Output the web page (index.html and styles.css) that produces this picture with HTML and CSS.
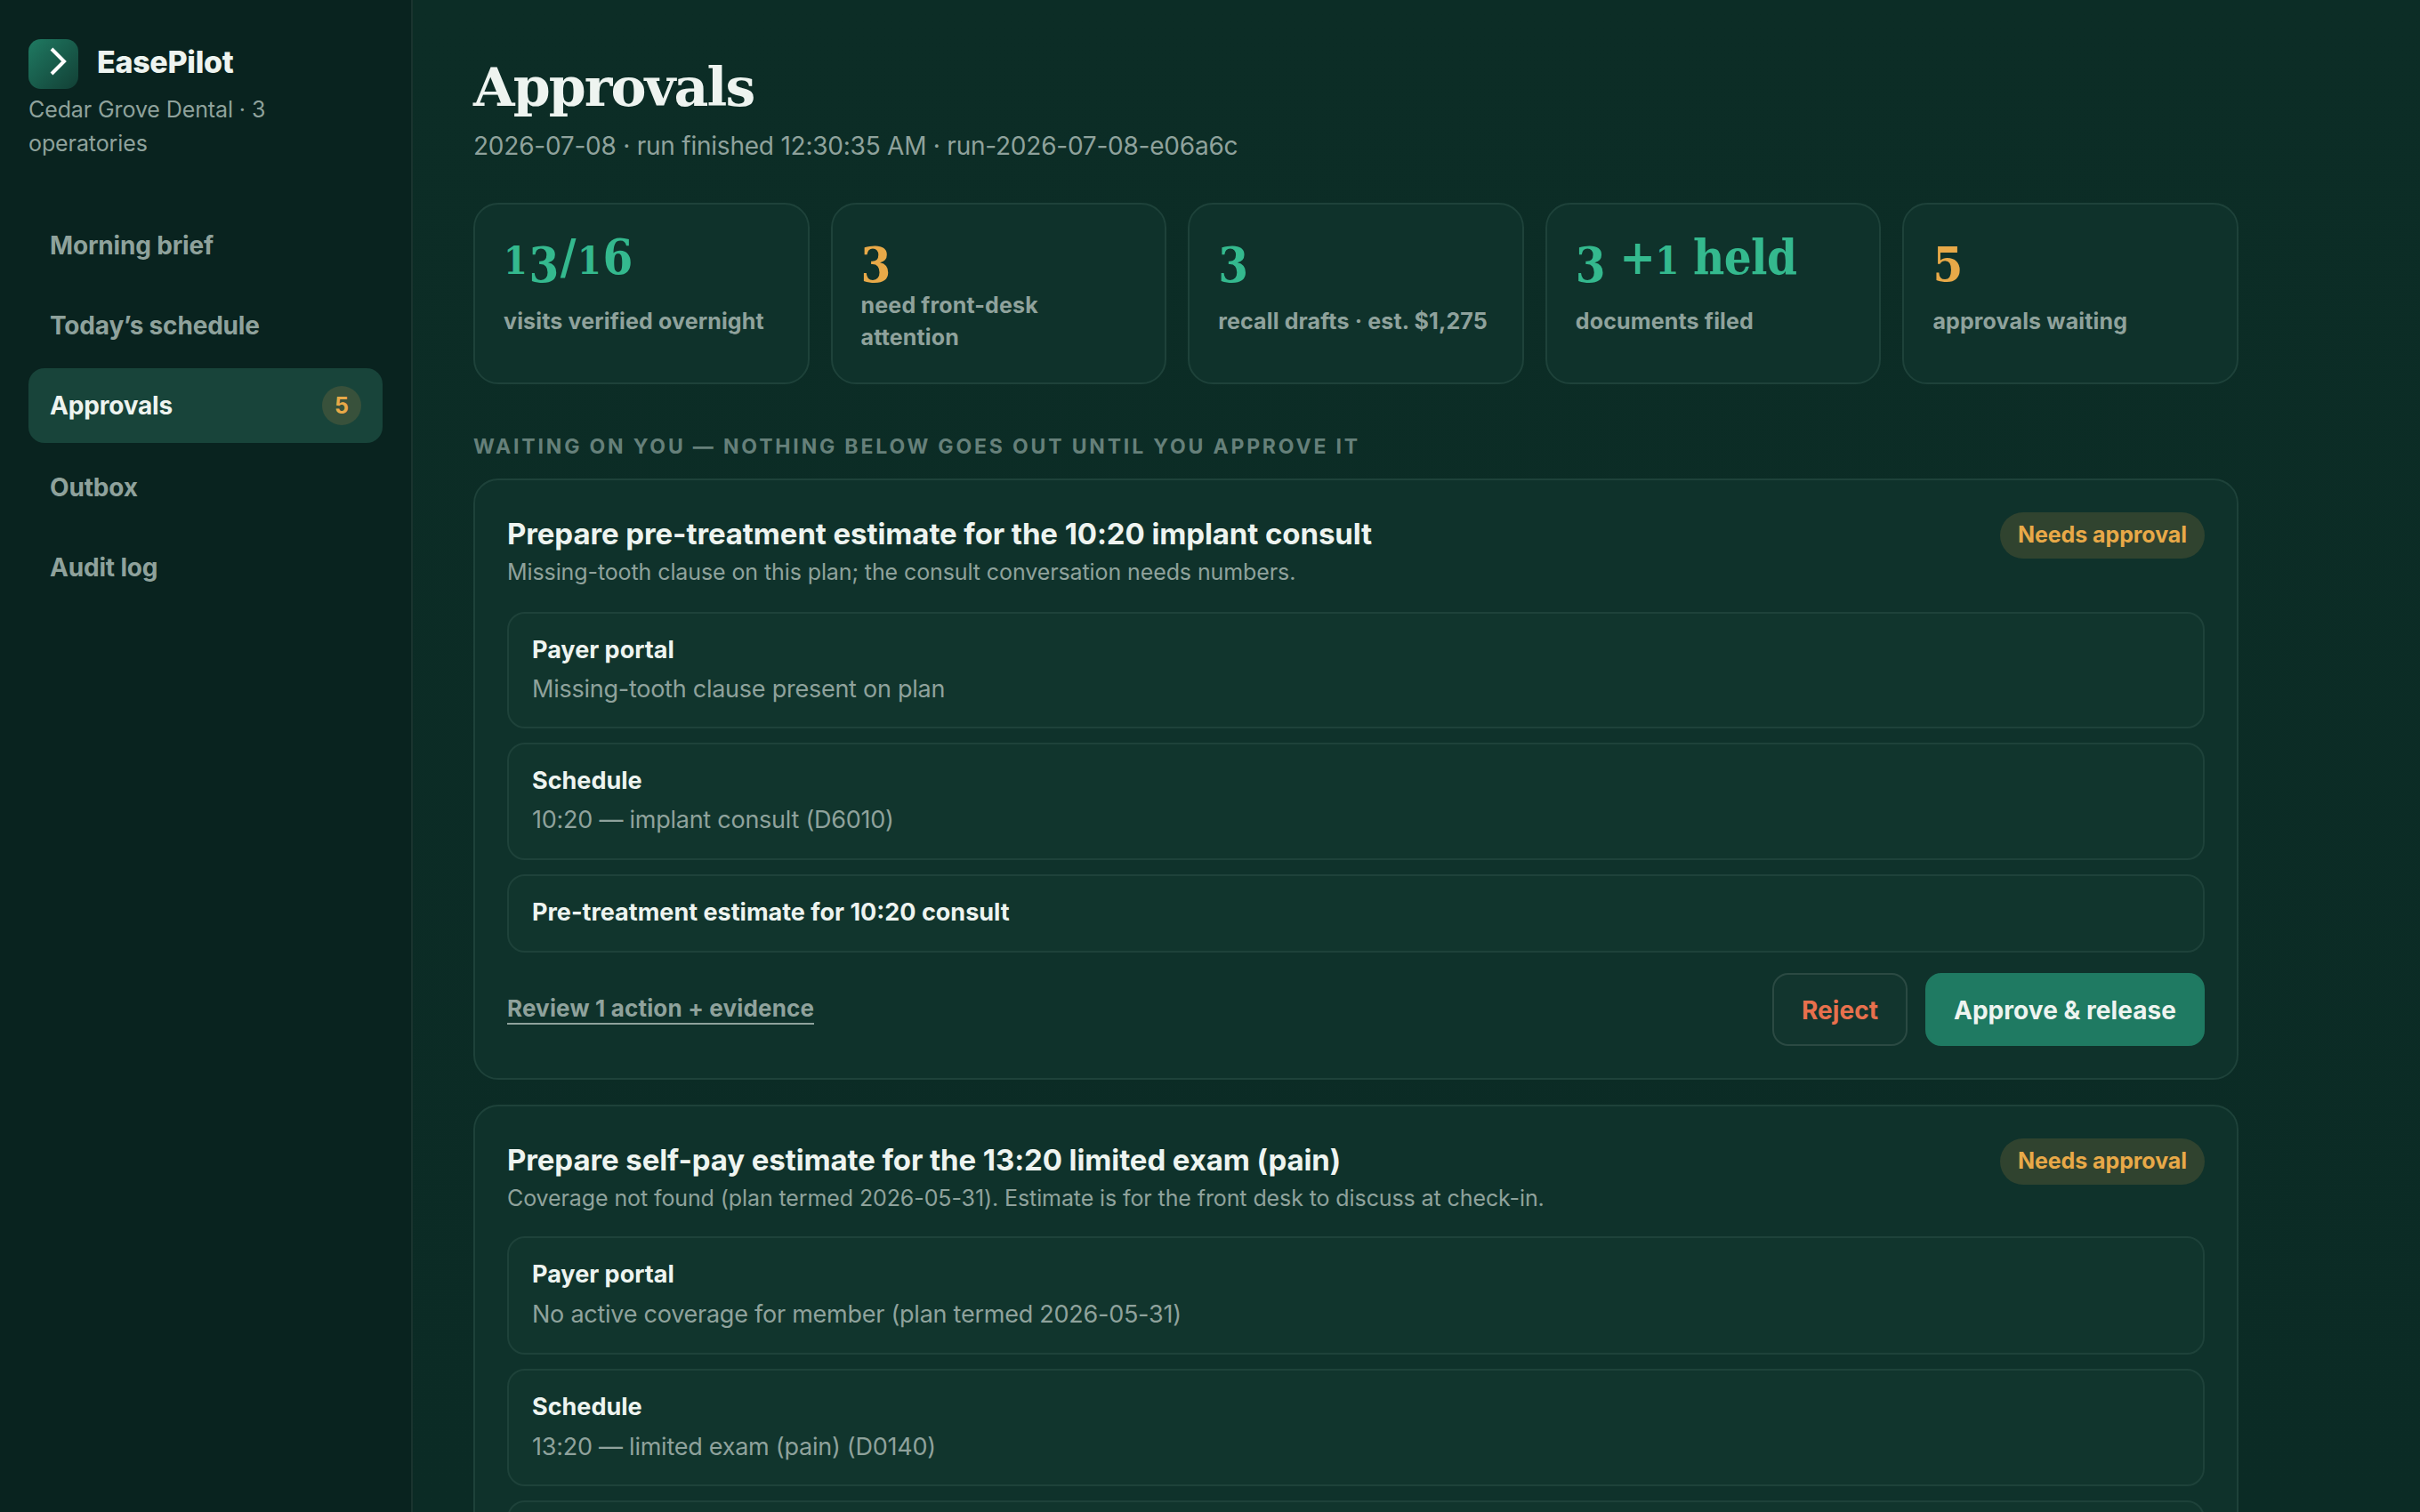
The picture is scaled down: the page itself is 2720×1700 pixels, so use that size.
FILE: index.html
```html
<!DOCTYPE html>
<html lang="en">
<head>
    <meta charset="utf-8">
    <title>EasePilot - Approvals</title>
    <link rel="stylesheet" href="styles.css">
</head>

<body>
    <aside class="sidebar">
        <div class="brand">
            <svg class="logo" viewBox="0 0 56 56">
                <defs>
                    <linearGradient id="logo-bg" x1="0" y1="0" x2="1" y2="1">
                        <stop offset="0" stop-color="#1f7a62" />
                        <stop offset="1" stop-color="#123f35" />
                    </linearGradient>
                </defs>
                <rect width="56" height="56" rx="14" fill="url(#logo-bg)" />
                <path d="M26 11 40 25 26 39" fill="none" stroke="#fff" stroke-width="4" />
            </svg>
            <span class="brand-name">EasePilot</span>
        </div>
        <p class="clinic">Cedar Grove Dental · 3 operatories</p>
        <nav class="nav">
            <a class="nav-item">Morning brief</a>
            <a class="nav-item">Today’s schedule</a>
            <a class="nav-item active">Approvals <span class="count">5</span></a>
            <a class="nav-item">Outbox</a>
            <a class="nav-item">Audit log</a>
        </nav>
    </aside>
    <main class="main">
        <h1 class="title">Approvals</h1>
        <p class="subtitle">2026-07-08 · run finished 12:30:35 AM · run-2026-07-08-e06a6c</p>

        <section class="stats">
            <div class="stat">
                <div class="stat-num"><span class="short">1</span><span class="low">3</span>/<span class="short">1</span>6</div>
                <div class="stat-label">visits verified overnight</div>
            </div>
            <div class="stat warn">
                <div class="stat-num"><span class="low">3</span></div>
                <div class="stat-label">need front-desk attention</div>
            </div>
            <div class="stat">
                <div class="stat-num"><span class="low">3</span></div>
                <div class="stat-label">recall drafts · est. $1,275</div>
            </div>
            <div class="stat">
                <div class="stat-num held"><span class="low">3</span> +<span class="short">1</span> held</div>
                <div class="stat-label">documents filed</div>
            </div>
            <div class="stat warn">
                <div class="stat-num"><span class="low">5</span></div>
                <div class="stat-label">approvals waiting</div>
            </div>
        </section>

        <h2 class="section-label">Waiting on you — nothing below goes out until you approve it</h2>

        <section class="card">
            <div class="card-head">
                <div>
                    <h3 class="card-title">Prepare pre-treatment estimate for the 10:20 implant consult</h3>
                    <p class="card-sub">Missing-tooth clause on this plan; the consult conversation needs numbers.</p>
                </div>
                <span class="pill">Needs approval</span>
            </div>
            <div class="evidence">
                <div class="item">
                    <strong>Payer portal</strong>
                    <p>Missing-tooth clause present on plan</p>
                </div>
                <div class="item">
                    <strong>Schedule</strong>
                    <p>10:20 — implant consult (D6010)</p>
                </div>
                <div class="item">
                    <strong>Pre-treatment estimate for 10:20 consult</strong>
                </div>
            </div>
            <div class="actions">
                <a class="review">Review 1 action + evidence</a>
                <button class="btn reject">Reject</button>
                <button class="btn approve">Approve &amp; release</button>
            </div>
        </section>

        <section class="card">
            <div class="card-head">
                <div>
                    <h3 class="card-title">Prepare self-pay estimate for the 13:20 limited exam (pain)</h3>
                    <p class="card-sub">Coverage not found (plan termed 2026-05-31). Estimate is for the front desk to discuss at check-in.</p>
                </div>
                <span class="pill">Needs approval</span>
            </div>
            <div class="evidence">
                <div class="item">
                    <strong>Payer portal</strong>
                    <p>No active coverage for member (plan termed 2026-05-31)</p>
                </div>
                <div class="item">
                    <strong>Schedule</strong>
                    <p>13:20 — limited exam (pain) (D0140)</p>
                </div>
                <div class="item"></div>
            </div>
        </section>
    </main>
</body>

</html>
```
FILE: styles.css
```css
* {
    box-sizing: border-box;
}
body {
    margin: 0;
    height: 1700px;
    overflow: hidden;
    display: flex;
    background: linear-gradient(180deg, #0c2d26, #0b2b25);
    color: #eef4f0;
    font-family: Inter, "Liberation Sans", sans-serif;
    font-size: 28px;
    line-height: 1.5;
}
h1,h2,h3,p {
    margin: 0;
}
.sidebar {
    width: 464px;
    flex-shrink: 0;
    padding: 44px 32px;
    background: #09231f;
    border-right: 2px solid #1a342f;
}
.brand {
    height: 56px;
    display: flex;
    align-items: center;
    gap: 21px;
}
.logo {
    width: 56px;
    height: 56px;
}
.brand-name {
    padding-bottom: 5px;
    font-size: 34px;
    font-weight: 800;
    letter-spacing: -0.3px;
}
.clinic {
    margin-top: 4px;
    color: #8fa29c;
    font-size: 25px;
    letter-spacing: -0.1px;
    line-height: 38px;
}
.nav {
    margin-top: 54px;
    display: flex;
    flex-direction: column;
    gap: 8px;
}
.nav-item {
    display: flex;
    align-items: center;
    justify-content: space-between;
    padding: 21px 24px 19px;
    border-radius: 18px;
    color: #8fa29c;
    font-weight: 700;
    letter-spacing: -0.18px;
}
.nav-item.active {
    padding: 20px 24px;
    background: #18443a;
    color: #eef4f0;
}
.count {
    width: 44px;
    height: 44px;
    border-radius: 50%;
    background: #38513b;
    color: #e8a948;
    font-size: 25px;
    font-weight: 700;
    line-height: 44px;
    text-align: center;
}
.main {
    width: 2052px;
    padding: 60px 0 0 68px;
}
.title {
    font-family: Georgia, "DejaVu Serif", serif;
    font-size: 60px;
    font-weight: 700;
    letter-spacing: -1.9px;
    line-height: 76px;
}
.subtitle {
    margin-top: 7px;
    color: #8fa29c;
    letter-spacing: -0.23px;
}
.stats {
    margin-top: 43px;
    display: grid;
    grid-template-columns: repeat(5, 1fr);
    gap: 24px;
}
.stat {
    height: 204px;
    padding: 32px;
    background: #0f322b;
    border: 2px solid #1e423a;
    border-radius: 28px;
}
.stat-num {
    height: 52px;
    color: #34b98e;
    font-family: Georgia, "DejaVu Serif Condensed", "DejaVu Serif", serif;
    font-size: 54px;
    font-stretch: 90%;
    font-weight: 700;
    letter-spacing: 1.5px;
    line-height: 54px;
    white-space: nowrap;
}
.stat-num.held {
    letter-spacing: -0.6px;
}
/* text figures: 3 and 5 hang below the baseline, 1 stays at x-height */
.low {
    line-height: 0;
    vertical-align: -9px;
}
.short {
    font-size: 43px;
    line-height: 0;
}
.stat.warn .stat-num {
    color: #e8a948;
}
.stat-label {
    height: 72px;
    margin-top: 11px;
    display: flex;
    align-items: center;
    color: #8fa29c;
    font-size: 25px;
    font-weight: 700;
    letter-spacing: 0.15px;
    line-height: 36px;
}
.section-label {
    margin: 52px 0 18px;
    color: #66807a;
    font-size: 23px;
    font-weight: 700;
    letter-spacing: 2.83px;
    line-height: 36px;
    text-transform: uppercase;
}
.card {
    margin-bottom: 28px;
    padding: 36px;
    background: #0f322b;
    border: 2px solid #1e423a;
    border-radius: 28px;
}
.card-head {
    display: flex;
    align-items: flex-start;
    justify-content: space-between;
}
.card-title {
    font-size: 33px;
    font-weight: 700;
    letter-spacing: -0.1px;
    line-height: 48px;
}
.card-sub {
    color: #8fa29c;
    font-size: 25px;
    letter-spacing: -0.1px;
    line-height: 38px;
}
.pill {
    padding: 0 20px 2px;
    border-radius: 26px;
    background: #30432f;
    color: #e8a948;
    font-size: 25px;
    font-weight: 700;
    letter-spacing: -0.07px;
    line-height: 50px;
}
.evidence {
    margin-top: 26px;
    display: flex;
    flex-direction: column;
    gap: 16px;
}
.card + .card .evidence {
    margin-top: 24px;
}
.item {
    min-height: 88px;
    padding: 22px 26px 23.4px;
    background: #11352d;
    border: 2px solid #1e423a;
    border-radius: 20px;
    font-size: 27px;
}
.item strong {
    display: block;
    font-weight: 700;
    line-height: 37px;
}
.item p {
    padding-top: 7px;
    color: #8fa29c;
    letter-spacing: -0.25px;
    line-height: 38px;
}
.card + .card .item p {
    padding-top: 8px;
}
.actions {
    margin-top: 23.6px;
    display: flex;
    align-items: center;
    gap: 20px;
}
.review {
    margin-right: auto;
    border-bottom: 2px solid #8fa29c;
    color: #8fa29c;
    font-size: 26px;
    font-weight: 700;
    letter-spacing: 0.17px;
    line-height: 32px;
}
.btn {
    height: 82px;
    padding: 2px 30px 0;
    border: 2px solid #1f7a62;
    border-radius: 18px;
    font-family: inherit;
    font-size: 28px;
    font-weight: 700;
    letter-spacing: 0.05px;
}
.approve {
    background: #1f7a62;
    color: #eef4f0;
}
.reject {
    min-width: 152px;
    background: #12352e;
    border-color: #2b4a43;
    color: #e8704d;
}
```
